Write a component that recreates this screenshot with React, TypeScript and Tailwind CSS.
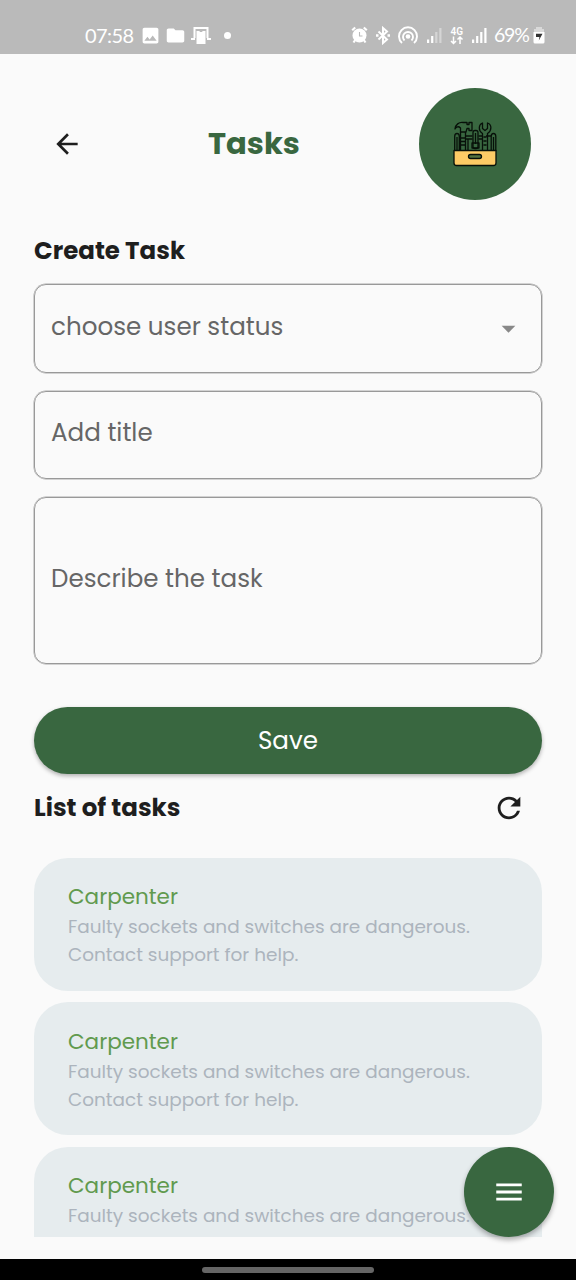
import React from "react";
import { MdArrowBack, MdRefresh, MdMenu, MdArrowDropDown, MdImage, MdFolder } from "react-icons/md";

const details = ["Faulty sockets and switches are dangerous.", "Contact support for help."];
const tasks = [
  { id: 1, title: "Carpenter", lines: details },
  { id: 2, title: "Carpenter", lines: details },
  { id: 3, title: "Carpenter", lines: details.slice(0, 1) },
];

function Signal({ dim = false }: { dim?: boolean }) {
  return (
    <svg width="15" height="17" viewBox="0 0 15 17" fill="#fff" className="block shrink-0">
      <rect x="0" y="12.500" width="2.200" height="3.500" />
      <rect x="4.100" y="9" width="2.200" height="7" />
      <rect x="8.200" y="5" width="2.200" height="11" opacity={dim ? 0.4 : 1} />
      <rect x="12.300" y="1" width="2.200" height="15" opacity={dim ? 0.4 : 1} />
    </svg>
  );
}

function StatusBar() {
  return (
    <div className="flex h-[54px] shrink-0 items-center bg-[#bababa] pt-[16px] pr-[31px] pl-[85px] text-white">
      <span className="w-[56px] whitespace-nowrap font-['Lato',sans-serif] text-[20px] leading-5 tracking-[-0.6px]">07:58</span>
      <MdImage size={21} className="-ml-px" />
      <MdFolder size={21} className="ml-[4px]" />
      <svg width="22" height="20" viewBox="0 0 22 20" className="ml-[4px]">
        <path d="M4.500 13V3h13v10M1 14h4M17 14h4" fill="none" stroke="#fff" strokeWidth="2" />
        <path d="M6.500 6h9v13h-9z" fill="#fff" />
        <path d="M9 5.500h4l-1 1.500h-2z" fill="#bababa" />
      </svg>
      <span className="ml-[12px] size-[7px] rounded-full bg-white" />
      <div className="ml-auto flex items-center">
        <svg width="17" height="18" viewBox="0 0 17 18" fill="none" className="shrink-0">
          <circle cx="8.500" cy="9.500" r="7" fill="#fff" />
          <path d="M1.200 4.200l3-2.700M15.800 4.200l-3-2.700M4.200 14l-1.700 2.500M12.800 14l1.700 2.500" stroke="#fff" strokeWidth="2.200" />
          <path d="M8.500 6v4h3" stroke="#bababa" strokeWidth="1.100" />
        </svg>
        <svg width="16" height="19" viewBox="0 0 16 19" className="ml-[7px] shrink-0" fill="none" stroke="#fff" strokeWidth="2">
          <path d="M3.500 5.500l8.500 8-4 3.500V2l4 3.500-8.500 8" />
          <path d="M1 9.500h2.500M12.500 9.500H15" strokeWidth="2.400" />
        </svg>
        <svg width="20" height="19" viewBox="0 0 20 19" className="ml-[7px] shrink-0" fill="none" stroke="#fff" strokeWidth="1.900">
          <circle cx="10" cy="10.500" r="2.300" fill="#fff" stroke="none" />
          <path d="M6.500 14.500a5 5 0 1 1 7 0M4 17a9 9 0 1 1 12 0" />
        </svg>
        <span className="ml-[9px]"><Signal dim /></span>
        <svg width="14" height="19" viewBox="0 0 14 19" className="ml-[8px] shrink-0">
          <text x="0.500" y="8.500" fontSize="10" fontWeight="600" fontFamily="Roboto, sans-serif" fill="#fff">4G</text>
          <path d="M3.500 10.500v7M1 15l2.500 2.500L6 15M10 18v-7M7.500 13.500L10 11l2.500 2.500" fill="none" stroke="#fff" strokeWidth="1.500" />
        </svg>
        <span className="ml-[8px]"><Signal /></span>
        <span className="ml-[7px] w-[39px] whitespace-nowrap font-['Lato',sans-serif] text-[19.500px] leading-5 tracking-[-1.2px]">69%</span>
        <svg width="12" height="18" viewBox="0 0 12 18" className="shrink-0">
          <path d="M3 3V1h6v2h2v4H1V3z" fill="#fff" opacity=".45" />
          <path d="M.5 6h11v10q0 1.500-1.500 1.500H2Q.5 17.500.5 16z" fill="#fff" />
          <path d="M3 7.800h6.500L5.800 14.500l.6-3.500H3z" fill="#333" />
        </svg>
      </div>
    </div>
  );
}

function Toolbox() {
  return (
    <svg width="70" height="68" viewBox="0 0 70 68" fill="none" stroke="#071009" strokeWidth="1.300" strokeLinejoin="round">
      <path d="M14.700 41V26.500q0-3 2.300-3t2.300 3V41M51.200 41V26.500q0-3 2.300-3t2.300 3V41M17 27v14M53.500 27v14" />
      <path d="M20.500 22v-4c-2-2-4-1.500-5.500 1 .5-4.500 4-7 8-6.500h4v2h2v-2h3v8h-3v-2h-2l-1 3.500z" />
      <path d="M20.500 22V41M25.500 22V41M21 28h4M21 31.500h4M21 35h4M28 29v12" />
      <path d="M25.500 26h7M38.500 26H43M25.500 29h7M38.500 29H43M46 26h5" />
      <rect x="33" y="20.500" width="5" height="18" rx="2" />
      <path d="M35.500 23v11M32 33h7v5h-7z" />
      <path d="M42.500 41V23.500c-4.500-3-4-9 0-10.500v5.500l2.500 2 2.500-2V13c4.500 1.500 4.500 7.500 0 10.500V41M43.500 27h3M43.500 31h3M43.500 35h3" />
      <path d="M14 40.500h42V53q0 2.500-2.500 2.500h-37q-2.500 0-2.500-2.500z" fill="#fdcb66" />
      <rect x="28.500" y="44.500" width="13" height="4" rx="2" fill="#54713f" />
    </svg>
  );
}

function TaskCard({ title, lines }: { title: string; lines: string[] }) {
  return (
    <div className="mb-[11.400px] flex h-[133px] shrink-0 flex-col rounded-[34px] bg-[#e6ecee] pt-[23.200px] pl-[34px] whitespace-nowrap">
      <h3 className="h-[32.300px] text-[21.500px] leading-[31px] text-[#619a4e]">{title}</h3>
      {lines.map((line) => (
        <p key={line} className="h-[28px] text-[18.450px] leading-[28px] text-[#acb4bd]">{line}</p>
      ))}
    </div>
  );
}

const field = "flex shrink-0 items-center rounded-[12px] border border-[#999] pl-[16px] text-[24.600px] text-[#666] shadow-[0_0_0_0.5px_#aaa]";

export default function App() {
  return (
    <div className="relative flex h-[1280px] w-[576px] flex-col overflow-hidden bg-[#fafafa] font-['Poppins','Inter',sans-serif] text-[#1e1e1e]">
      <StatusBar />
      <main className="flex h-[1183px] shrink-0 flex-col overflow-hidden px-[34px] pt-[34px]">
        <header className="flex h-[112px] shrink-0 items-center">
          <MdArrowBack size={32} className="ml-[17px]" />
          <h1 className="ml-[125px] w-[92px] text-[30.600px] leading-[40px] font-bold whitespace-nowrap text-[#396740]">Tasks</h1>
          <div className="mr-[11px] ml-auto flex size-[112px] items-center justify-center rounded-full bg-[#396740]"><Toolbox /></div>
        </header>
        <h2 className="mt-[33px] h-[36px] shrink-0 text-[24.500px] leading-[36px] font-bold whitespace-nowrap">Create Task</h2>
        <div className={`${field} mt-[15px] h-[89px] justify-between pr-[16px] pb-[3px]`}>
          <span>choose user status</span>
          <MdArrowDropDown size={33} className="mt-[3px] text-[#888]" />
        </div>
        <div className={`${field} mt-[17.500px] h-[88.500px] pb-[2.500px]`}>Add title</div>
        <div className={`${field} mt-[18px] h-[167px] pb-[2px]`}>Describe the task</div>
        <button className="mt-[43px] h-[67px] shrink-0 rounded-full bg-[#396740] pt-[2px] text-[24.600px] text-white shadow-[0_2px_4px_rgba(0,0,0,0.3)]">Save</button>
        <div className="flex h-[67px] shrink-0 items-center justify-between pr-[16px]">
          <h2 className="pt-[2px] text-[24.500px] font-bold whitespace-nowrap">List of tasks</h2>
          <MdRefresh size={34} />
        </div>
        <div className="mt-[17px] flex flex-1 flex-col overflow-hidden">
          {tasks.map((t) => <TaskCard key={t.id} title={t.title} lines={t.lines} />)}
        </div>
      </main>
      <div className="h-[22px] shrink-0" />
      <div className="flex h-[21px] shrink-0 items-center justify-center bg-black"><div className="h-[6px] w-[172px] rounded-full bg-[#666]" /></div>
      <button className="absolute top-[1147px] left-[464px] flex size-[90px] items-center justify-center rounded-full bg-[#396740] text-white shadow-[0_3px_5px_rgba(0,0,0,0.3)]"><MdMenu size={34} /></button>
    </div>
  );
}
